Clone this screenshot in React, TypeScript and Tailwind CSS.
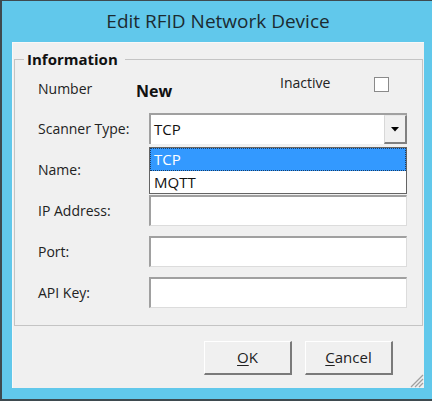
import React from "react";

const font = { fontFamily: '"Open Sans", "Noto Sans", sans-serif' };

function TextBox() {
  return (
    <div className="w-[258px] h-[31px] bg-white border-t-2 border-l-2 border-t-[#a0a0a0] border-l-[#a0a0a0] border-r border-b border-r-[#dcdcdc] border-b-[#dcdcdc]" />
  );
}

function Row({ label, children }: { label: string; children: React.ReactNode }) {
  return (
    <div className="flex items-center h-[31px]">
      <div className="w-[111px] text-[14px] leading-[20px] text-[#222]">{label}</div>
      {children}
    </div>
  );
}

function Btn({ first, rest }: { first: string; rest: string }) {
  return (
    <div className="w-[88px] h-[34px] bg-[#f0f0f0] border-t border-l border-t-white border-l-white border-r-2 border-b-2 border-r-[#7a7a7a] border-b-[#7a7a7a] flex items-center justify-center text-[15px] text-[#222]">
      <span>
        <span className="underline underline-offset-2">{first}</span>
        {rest}
      </span>
    </div>
  );
}

export default function App() {
  return (
    <div
      style={font}
      className="w-[432px] h-[401px] bg-[#61c8eb] border-l-2 border-t border-b-2 border-[#3e4a4f] flex flex-col"
    >
      <div className="h-[41px] flex items-center justify-center text-[19px] text-[#1c2b31] pl-[2px]">
        Edit RFID Network Device
      </div>
      <div className="relative ml-[10px] w-[412px] h-[346px] bg-[#f0f0f0] border-t border-l border-[#f8f8f8] flex flex-col">
        <fieldset className="mt-[6px] ml-[1px] mr-[1px] border border-[#c4c4c4] pb-[17px]">
          <legend className="ml-[9px] pl-[3px] pr-[7px] text-[15px] leading-[20px] font-bold text-[#111]">
            Information
          </legend>
          <div className="pl-[23px] flex flex-col">
            <div className="flex items-start h-[44px]">
              <div className="w-[98px] mt-[10px] text-[14px] leading-[20px] text-[#222]">Number</div>
              <div className="w-[144px] mt-[11px] text-[16px] leading-[22px] font-bold text-[#111]">New</div>
              <div className="w-[94px] mt-[4px] text-[14px] leading-[20px] text-[#222]">Inactive</div>
              <div className="mt-[8px] w-[15px] h-[15px] bg-white border border-[#8a8a8a]" />
            </div>
            <div className="flex flex-col gap-[10px]">
              <Row label="Scanner Type:">
                <div className="relative w-[258px] h-[31px]">
                  <div className="w-full h-full bg-white border-t-2 border-l-2 border-t-[#a0a0a0] border-l-[#a0a0a0] flex items-stretch">
                    <div className="flex-1 flex items-center pl-[3px] text-[15px] text-[#111]">TCP</div>
                    <div className="w-[23px] bg-[#f0f0f0] border-t border-l border-t-[#e8e8e8] border-l-[#d8d8d8] border-r-2 border-b-2 border-r-[#808080] border-b-[#808080] flex items-center justify-center">
                      <svg width="8" height="5" viewBox="0 0 8 5">
                        <polygon points="0,0 8,0 4,4.5" fill="#000" />
                      </svg>
                    </div>
                  </div>
                  <div className="absolute left-0 top-[34px] w-[258px] h-[47px] bg-white border border-[#646464] z-10 flex flex-col">
                    <div className="h-[23px] bg-[#3399ff] border border-dotted border-[#1a3e66] flex items-center pl-[3px] text-[15px] text-white">
                      TCP
                    </div>
                    <div className="h-[22px] flex items-center pl-[4px] text-[15px] text-[#111]">MQTT</div>
                  </div>
                </div>
              </Row>
              <Row label="Name:">
                <TextBox />
              </Row>
              <Row label="IP Address:">
                <TextBox />
              </Row>
              <Row label="Port:">
                <TextBox />
              </Row>
              <Row label="API Key:">
                <TextBox />
              </Row>
            </div>
          </div>
        </fieldset>
        <div className="flex justify-end gap-[13px] pt-[15px] pr-[31px]">
          <Btn first="O" rest="K" />
          <Btn first="C" rest="ancel" />
        </div>
        <svg className="absolute right-0 bottom-0" width="16" height="16" viewBox="0 0 16 16">
          <g stroke="#a0a0a0" strokeWidth="1.3">
            <line x1="15" y1="3" x2="3" y2="15" />
            <line x1="15" y1="7" x2="7" y2="15" />
            <line x1="15" y1="11" x2="11" y2="15" />
          </g>
        </svg>
      </div>
    </div>
  );
}
